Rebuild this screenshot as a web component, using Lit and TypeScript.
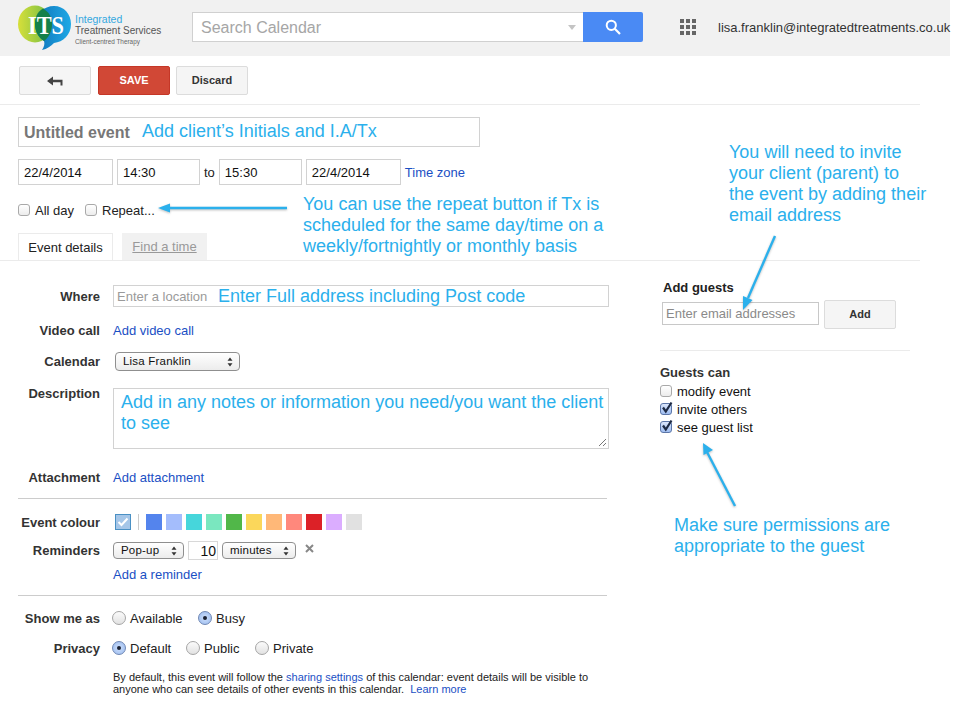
import { LitElement, html, css, svg } from "lit";
import { customElement } from "lit/decorators.js";

const COLOURS = ["#5484ed","#a4bdfc","#46d6db","#7ae7bf","#51b749","#fbd75b","#ffb878","#ff887c","#dc2127","#dbadff","#e1e1e1"];

const tick = svg`<svg class="tick" width="14" height="14" viewBox="0 0 14 14"><path d="M3 6.5 L5.8 10.5 L11.5 1.5" fill="none" stroke="#1d2a44" stroke-width="2.2"/></svg>`;
const updown = svg`<svg class="ud" width="6" height="10" viewBox="0 0 6 10"><path d="M3 0.5 L5.5 3.8 H0.5Z M3 9.5 L5.5 6.2 H0.5Z" fill="#333"/></svg>`;

@customElement("app-root")
export class AppRoot extends LitElement {
  static styles = css`
    :host { display: block; position: relative; width: 955px; height: 722px; overflow: hidden; background: #fff;
      font: 13px/15px "Liberation Sans", Arial, sans-serif; color: #222; }
    * { box-sizing: border-box; }
    a { color: #1a4fc4; text-decoration: none; }

    header { width: 950px; height: 56px; padding-bottom: 2px; background: #f1f1f1; display: flex; align-items: center; }
    .logo { margin-left: 18px; width: 144px; height: 46px; display: flex; gap: 3px; flex: none; margin-top: 1px; }
    .logo svg { flex: none; }
    .logo-text { display: flex; flex-direction: column; padding-top: 9px; white-space: nowrap; }
    .logo-a { font-size: 10.5px; line-height: 11px; color: #35a8e0; }
    .logo-b { font-size: 10px; line-height: 11px; color: #555; }
    .logo-c { font-size: 6.4px; line-height: 11px; color: #666; }
    .search { margin-left: 30px; width: 391px; height: 30px; background: #fff; border: 1px solid #d0d0d0; border-right: none; display: flex; align-items: center; justify-content: space-between; padding: 0 7px 0 8px; font-size: 16px; color: #a6a6a6; flex: none; }
    .caret { width: 0; height: 0; border: 4.5px solid transparent; border-top: 5px solid #c4c4c4; border-bottom: none; }
    .search-btn { width: 60px; height: 30px; background: #4a8af4; border-radius: 0 2px 2px 0; display: flex; align-items: center; justify-content: center; flex: none; }
    .apps { margin-left: 37px; display: grid; grid-template-columns: repeat(3, 4px); grid-auto-rows: 4px; gap: 2px; flex: none; }
    .apps i { background: #666; display: block; }
    .user { margin-left: 22px; font-size: 13px; white-space: nowrap; color: #333; }

    .toolbar { width: 920px; height: 49px; padding: 10px 0 0 19px; border-bottom: 1px solid #ebebeb; display: flex; gap: 6px; }
    .btn { height: 29px; width: 72px; background: #f5f5f5; border: 1px solid #dcdcdc; border-radius: 2px; font-size: 11px; font-weight: bold; color: #333; display: flex; align-items: center; justify-content: center; }
    .toolbar .back { margin-right: 1px; }
    .btn.save { background: #d14836; border-color: #c53727; color: #fff; margin-right: 0; }

    .field { border: 1px solid #d2d2d2; background: #fff; display: flex; align-items: center; }
    .title { margin: 12px 0 0 18px; width: 462px; height: 30px; padding-left: 5px; font-size: 16px; font-weight: bold; color: #777; }
    .when { margin: 12px 0 0 18px; height: 26px; display: flex; align-items: center; gap: 4px; }
    .when .field { height: 26px; padding-left: 5px; font-size: 13px; color: #111; }
    .d { width: 95px; } .t { width: 83px; }
    .opts { margin: 18px 0 0 18px; height: 14px; display: flex; align-items: center; }
    .cb { width: 12px; height: 12px; border: 1px solid #a9a9a9; border-radius: 3px; background: linear-gradient(#fff, #ececec); flex: none; position: relative; display: block; }
    .cb.on { background: linear-gradient(#dbe6fb, #9fbdf0); border-color: #5c76a8; }
    .tick { position: absolute; left: -1px; top: -3px; }
    .opts .cb { margin-right: 5px; }
    .opts .allday { width: 50px; }

    .tabs { margin-top: 16px; height: 27px; width: 920px; padding-left: 18px; display: flex; gap: 9px; align-items: flex-end; }
    .tab { height: 27px; width: 95px; display: flex; align-items: center; justify-content: center; border: 1px solid #ebebeb; border-bottom: none; background: #fff; }
    .tab.off { width: 85px; background: #f1f1f1; border: none; color: #999; text-decoration: underline; }
    .rule-top { width: 920px; height: 1px; background: #ebebeb; }

    main { display: flex; }
    .form { width: 609px; flex: none; padding-left: 18px; }
    .row { display: grid; grid-template-columns: 82px 1fr; column-gap: 13px; align-items: center; }
    .lbl { text-align: right; font-weight: bold; color: #333; white-space: nowrap; }
    .where { margin-top: 24px; }
    .where .field { height: 22px; padding-left: 3px; font-size: 13px; color: #9a9a9a; }
    .video { margin-top: 14px; height: 18px; }
    .cal { margin-top: 13px; height: 19px; }
    .select { height: 19px; border: 1px solid #8f8f8f; border-radius: 4px; background: linear-gradient(#fff, #ececec); font-size: 11.5px; color: #111; display: flex; align-items: center; justify-content: space-between; padding: 0 6px 0 7px; flex: none; letter-spacing: 0.2px; }
    .cal .select { width: 125px; margin-left: 2px; }
    .desc { margin-top: 17px; align-items: start; }
    .desc .lbl { margin-top: -2px; }
    .area { height: 61px; border: 1px solid #d2d2d2; position: relative; }
    .grip { position: absolute; right: 1px; bottom: 1px; }
    .attach { margin-top: 19px; height: 18px; }
    .hr { height: 1px; background: #ccc; width: 589px; }
    .attach + .hr { margin-top: 12px; }
    .colour { margin-top: 15px; height: 16px; }
    .swatches { display: flex; align-items: center; margin-left: 2px; }
    .sel { width: 16px; height: 16px; background: #a5c6e8; border: 1px solid #4a90c4; display: flex; align-items: center; justify-content: center; margin-right: 7px; }
    .bar { width: 1px; height: 16px; background: #ccc; margin-right: 7px; }
    .sw { width: 16px; height: 16px; margin-right: 4px; display: block; }
    .rem { margin-top: 11px; height: 19px; }
    .rem-c { display: flex; align-items: center; gap: 4px; }
    .rem .select { height: 17px; }
    .s1 { width: 71px; } .s2 { width: 74px; }
    .num { width: 30px; height: 19px; border: 1px solid #d8d8d8; text-align: right; padding-right: 1px; font-size: 14px; line-height: 18px; color: #111; }
    .x { margin-left: 5px; margin-top: -5px; display: block; }
    .addrem { margin-top: 5px; height: 18px; }
    .addrem + .hr { margin-top: 12px; }
    .show { margin-top: 13px; height: 18px; }
    .priv { margin-top: 12px; height: 18px; }
    .radios { display: flex; align-items: center; margin-left: -1px; }
    .rd { width: 14px; height: 14px; border: 1px solid #a5a5a5; border-radius: 50%; background: linear-gradient(#fbfbfb, #e2e2e2); margin-right: 4px; flex: none; display: flex; align-items: center; justify-content: center; }
    .rd.on { background: radial-gradient(circle, #cfe0fb, #98b9ee); border-color: #6f87b4; }
    .rd.on::after { content: ""; width: 4px; height: 4px; border-radius: 50%; background: #1b2233; }
    .w-avail { width: 68px; } .w-def { width: 56px; } .w-pub { width: 51px; }
    .note { margin: 14px 0 0 95px; font-size: 11px; line-height: 12px; width: 500px; color: #222; white-space: nowrap; }

    aside { flex: none; padding-left: 51px; width: 311px; }
    .ag { margin: 19px 0 0 3px; font-weight: bold; color: #222; height: 15px; }
    .ag-row { margin: 5px 0 0 2px; display: flex; align-items: center; gap: 5px; }
    .ag-row .field { width: 157px; height: 23px; margin-bottom: 2px; padding-left: 3px; color: #8a8a8a; font-size: 13px; border-color: #c8c8c8; }
    .ag-row .btn { width: 72px; }
    .side-hr { width: 250px; height: 1px; background: #ebebeb; margin-top: 21px; }
    .gc { margin-top: 14px; font-weight: bold; color: #333; height: 15px; }
    .perm { display: flex; align-items: center; height: 18px; color: #111; }
    .perm .cb { margin-right: 5px; }
    .gc + .perm { margin-top: 2px; }

    .note-blue { position: absolute; color: #2bb0ec; font-size: 18px; line-height: 21px; white-space: nowrap; }
    .arrows { position: absolute; left: 0; top: 0; pointer-events: none; }
    .arrows g { filter: drop-shadow(0 1px 1px rgba(0,0,0,.25)); }
  `;

  private rd(label: string, on: boolean, cls: string) {
    return html`<span class="rd ${on ? "on" : ""}"></span><span class=${cls}>${label}</span>`;
  }
  private perm(label: string, on: boolean) {
    return html`<div class="perm"><span class="cb ${on ? "on" : ""}">${on ? tick : ""}</span>${label}</div>`;
  }

  render() {
    return html`
      <header>
        <div class="logo">
          <svg width="54" height="46" viewBox="0 0 54 46">
            <defs>
              <linearGradient id="lg" x1="0" x2="1" y1="0" y2="0"><stop offset="0" stop-color="#d7df3a"/><stop offset="1" stop-color="#6dbb45"/></linearGradient>
              <linearGradient id="lb" x1="0" x2="1" y1="0" y2="0"><stop offset="0" stop-color="#0f72b8"/><stop offset="1" stop-color="#1fa9e6"/></linearGradient>
            </defs>
            <ellipse cx="17" cy="19" rx="17" ry="18.5" fill="url(#lg)"/>
            <path d="M36 1 C46 1 53 9 53 19 C53 30 45 37 36 38 C33 41 29 44 24 45 C26 42 27 39 26 36 C20 32 17 26 17 19 C17 9 26 1 36 1Z" fill="url(#lb)"/>
            <path d="M25 3.5 C19 7 17 13 17 19 C17 26 20 32 26 36 C30 33 34 27 34 19 C34 12 31 7 25 3.5Z" fill="#14804a"/>
            <text x="10" y="29" font-family="Liberation Serif, serif" font-weight="bold" font-size="26" fill="#fff" textLength="36" lengthAdjust="spacingAndGlyphs">ITS</text>
          </svg>
          <div class="logo-text">
            <span class="logo-a">Integrated</span>
            <span class="logo-b">Treatment Services</span>
            <span class="logo-c">Client-centred Therapy</span>
          </div>
        </div>
        <div class="search">Search Calendar<span class="caret"></span></div>
        <div class="search-btn">
          <svg width="16" height="16" viewBox="0 0 16 16"><circle cx="6.3" cy="6.3" r="4.6" fill="none" stroke="#fff" stroke-width="2"/><path d="M9.8 9.8 L15 15" stroke="#fff" stroke-width="2.2"/></svg>
        </div>
        <div class="apps">${Array.from({ length: 9 }, () => html`<i></i>`)}</div>
        <div class="user">lisa.franklin@integratedtreatments.co.uk</div>
      </header>

      <div class="toolbar">
        <div class="btn back">
          <svg width="16" height="10" viewBox="0 0 16 10"><path d="M0 5 L6 0.5 V3.8 H15.5 V9.5 H13.5 V6.2 H6 V9.5Z" fill="#444"/></svg>
        </div>
        <div class="btn save">SAVE</div>
        <div class="btn">Discard</div>
      </div>

      <div class="field title">Untitled event</div>
      <div class="when">
        <div class="field d">22/4/2014</div>
        <div class="field t">14:30</div>
        <span>to</span>
        <div class="field t">15:30</div>
        <div class="field d">22/4/2014</div>
        <a>Time zone</a>
      </div>
      <div class="opts">
        <span class="cb"></span><span class="allday">All day</span>
        <span class="cb"></span><span>Repeat...</span>
      </div>
      <div class="tabs">
        <div class="tab">Event details</div>
        <div class="tab off">Find a time</div>
      </div>
      <div class="rule-top"></div>

      <main>
        <section class="form">
          <div class="row where"><span class="lbl">Where</span><div class="field">Enter a location</div></div>
          <div class="row video"><span class="lbl">Video call</span><a>Add video call</a></div>
          <div class="row cal"><span class="lbl">Calendar</span><div class="select">Lisa Franklin ${updown}</div></div>
          <div class="row desc"><span class="lbl">Description</span>
            <div class="area">
              <svg class="grip" width="9" height="9" viewBox="0 0 9 9"><path d="M1 8 L8 1 M5 8 L8 5" stroke="#777" stroke-width="1"/></svg>
            </div>
          </div>
          <div class="row attach"><span class="lbl">Attachment</span><a>Add attachment</a></div>
          <div class="hr"></div>
          <div class="row colour"><span class="lbl">Event colour</span>
            <div class="swatches">
              <span class="sel"><svg width="12" height="10" viewBox="0 0 12 10"><path d="M1.5 5 L4.5 8 L10.5 1.5" fill="none" stroke="#fff" stroke-width="2"/></svg></span>
              <span class="bar"></span>
              ${COLOURS.map((c) => html`<span class="sw" style="background:${c}"></span>`)}
            </div>
          </div>
          <div class="row rem"><span class="lbl">Reminders</span>
            <div class="rem-c">
              <div class="select s1">Pop-up ${updown}</div>
              <div class="num">10</div>
              <div class="select s2">minutes ${updown}</div>
              <svg class="x" width="9" height="9" viewBox="0 0 9 9"><path d="M1 1 L8 8 M8 1 L1 8" stroke="#888" stroke-width="2"/></svg>
            </div>
          </div>
          <div class="row addrem"><span></span><a>Add a reminder</a></div>
          <div class="hr"></div>
          <div class="row show"><span class="lbl">Show me as</span>
            <div class="radios">${this.rd("Available", false, "w-avail")}${this.rd("Busy", true, "")}</div>
          </div>
          <div class="row priv"><span class="lbl">Privacy</span>
            <div class="radios">${this.rd("Default", true, "w-def")}${this.rd("Public", false, "w-pub")}${this.rd("Private", false, "")}</div>
          </div>
          <div class="note">By default, this event will follow the <a>sharing settings</a> of this calendar: event details will be visible to<br>anyone who can see details of other events in this calendar.&nbsp; <a>Learn more</a></div>
        </section>
        <aside>
          <div class="ag">Add guests</div>
          <div class="ag-row"><div class="field">Enter email addresses</div><div class="btn">Add</div></div>
          <div class="side-hr"></div>
          <div class="gc">Guests can</div>
          ${this.perm("modify event", false)}
          ${this.perm("invite others", true)}
          ${this.perm("see guest list", true)}
        </aside>
      </main>

      <div class="note-blue" style="left:142px;top:121px">Add client’s Initials and I.A/Tx</div>
      <div class="note-blue" style="left:303px;top:194px">You can use the repeat button if Tx is<br>scheduled for the same day/time on a<br>weekly/fortnightly or monthly basis</div>
      <div class="note-blue" style="left:729px;top:142px">You will need to invite<br>your client (parent) to<br>the event by adding their<br>email address</div>
      <div class="note-blue" style="left:218px;top:286px">Enter Full address including Post code</div>
      <div class="note-blue" style="left:121px;top:392px">Add in any notes or information you need/you want the client<br>to see</div>
      <div class="note-blue" style="left:674px;top:515px">Make sure permissions are<br>appropriate to the guest</div>

      <svg class="arrows" width="955" height="722" viewBox="0 0 955 722">
        <g stroke="#2bb0ec" stroke-width="2.4" fill="#2bb0ec">
          <path d="M287 208 H166" fill="none"/><path d="M158 208 L170 203.5 V212.5Z" stroke="none"/>
          <path d="M775 236 L748 298" fill="none"/><path d="M743 310 L743 296 L752.5 300Z" stroke="none"/>
          <path d="M735 506 L707 452" fill="none"/><path d="M703 443 L713 450 L703.5 455Z" stroke="none"/>
        </g>
      </svg>
    `;
  }
}
